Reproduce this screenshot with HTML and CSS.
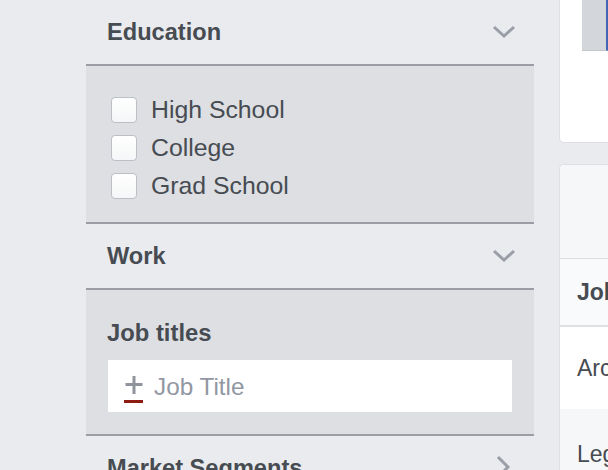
FILE: index.html
```html
<!DOCTYPE html>
<html>
<head>
<meta charset="utf-8">
<link rel="stylesheet" href="styles.css">
</head>
<body>
<div class="page">
  <div class="filters">
    <div class="sec-head">
      <span class="sec-title">Education</span>
      <svg class="chev" width="24" height="14" viewBox="0 0 24 14"><path d="M2 2 L12 11 L22 2" fill="none" stroke="#9a9ea6" stroke-width="3"/></svg>
    </div>
    <div class="sec-body edu">
      <label class="check-row"><span class="box"></span><span class="check-label">High School</span></label>
      <label class="check-row"><span class="box"></span><span class="check-label">College</span></label>
      <label class="check-row"><span class="box"></span><span class="check-label">Grad School</span></label>
    </div>
    <div class="sec-head">
      <span class="sec-title">Work</span>
      <svg class="chev" width="24" height="14" viewBox="0 0 24 14"><path d="M2 2 L12 11 L22 2" fill="none" stroke="#9a9ea6" stroke-width="3"/></svg>
    </div>
    <div class="sec-body work">
      <div class="sub-title">Job titles</div>
      <div class="input">
        <span class="plus">
          <svg width="20" height="28" viewBox="0 0 20 28"><path d="M10 0 V18 M1.5 8.5 H18.5" stroke="#90949c" stroke-width="3" fill="none"/><rect x="0" y="24" width="19" height="3" fill="#8f1c12"/></svg>
        </span>
        <span class="placeholder">Job Title</span>
      </div>
    </div>
    <div class="sec-head last">
      <span class="sec-title">Market Segments</span>
      <svg class="chev-r" width="16" height="24" viewBox="0 0 16 24"><path d="M2 2 L12 12 L2 22" fill="none" stroke="#9a9ea6" stroke-width="3"/></svg>
    </div>
  </div>
  <div class="side">
    <div class="card top-card">
      <div class="thumb"></div>
    </div>
    <div class="card table-card">
      <div class="tc-top"></div>
      <div class="tc-row tc-head">Job</div>
      <div class="tc-row">Archivist</div>
      <div class="tc-row alt">Legal</div>
    </div>
  </div>
</div>
</body>
</html>
```

FILE: styles.css
```css
html, body {
  margin: 0;
  padding: 0;
}
body {
  background: #e9ebee;
  font-family: "Liberation Sans", Arial, sans-serif;
  color: #474b52;
  overflow: hidden;
  width: 608px;
  height: 470px;
}
.page {
  display: flex;
  gap: 25px;
  padding-left: 86px;
}
.filters {
  width: 448px;
  flex: none;
}
.sec-head {
  height: 64px;
  display: flex;
  align-items: center;
  justify-content: space-between;
  padding: 0 18px 0 21px;
  border-bottom: 2px solid #9a9da3;
}
.sec-head.last {
  border-bottom: none;
  padding-right: 22px;
}
.sec-title {
  font-weight: bold;
  font-size: 23.6px;
}
.chev {
  display: block;
  margin-top: -1px;
}
.chev-r {
  display: block;
  margin-top: -2px;
}
.sec-body {
  background: #dddfe2;
  border-bottom: 2px solid #9a9da3;
}
.edu {
  padding: 25px 0 17px 25px;
}
.check-row {
  display: flex;
  align-items: center;
  height: 38px;
  gap: 14px;
}
.box {
  width: 24px;
  height: 24px;
  border: 1px solid #bcc0c6;
  border-radius: 4px;
  background: linear-gradient(#ffffff, #f5f6f7);
  flex: none;
}
.check-label {
  font-size: 24.8px;
}
.work {
  padding: 29px 22px 22px 22px;
}
.sub-title {
  font-weight: bold;
  font-size: 23.8px;
  line-height: 28px;
  margin-bottom: 13px;
  margin-left: -1px;
}
.input {
  background: #fff;
  height: 52px;
  display: flex;
  align-items: center;
  padding-left: 16px;
  gap: 10px;
}
.plus svg {
  display: block;
  margin-top: 8px;
}
.placeholder {
  font-size: 24.3px;
  color: #9197a3;
  margin-top: 2px;
}
.side {
  flex: 1;
  min-width: 0;
}
.card {
  background: #fff;
  border: 1px solid #dddfe2;
  border-right: none;
}
.top-card {
  height: 142px;
  border-top: none;
  border-radius: 0 0 0 5px;
  padding-left: 22px;
}
.thumb {
  width: 24px;
  height: 50px;
  background: #d3d6db;
  border-right: 2px solid #4267b2;
  border-bottom: 1px solid #c2c5ca;
}
.table-card {
  margin-top: 21px;
  border-radius: 5px 0 0 0;
  overflow: hidden;
}
.tc-top {
  height: 93px;
  background: #f6f7f9;
  border-bottom: 1px solid #dddfe2;
}
.tc-row {
  height: 82px;
  display: flex;
  align-items: center;
  padding-left: 17px;
  font-size: 23px;
  white-space: nowrap;
}
.tc-head {
  height: 66px;
  font-weight: bold;
  background: #f9fafb;
  border-bottom: 2px solid #dddfe2;
}
.tc-row.alt {
  background: #f6f7f9;
  height: 90px;
}
```
